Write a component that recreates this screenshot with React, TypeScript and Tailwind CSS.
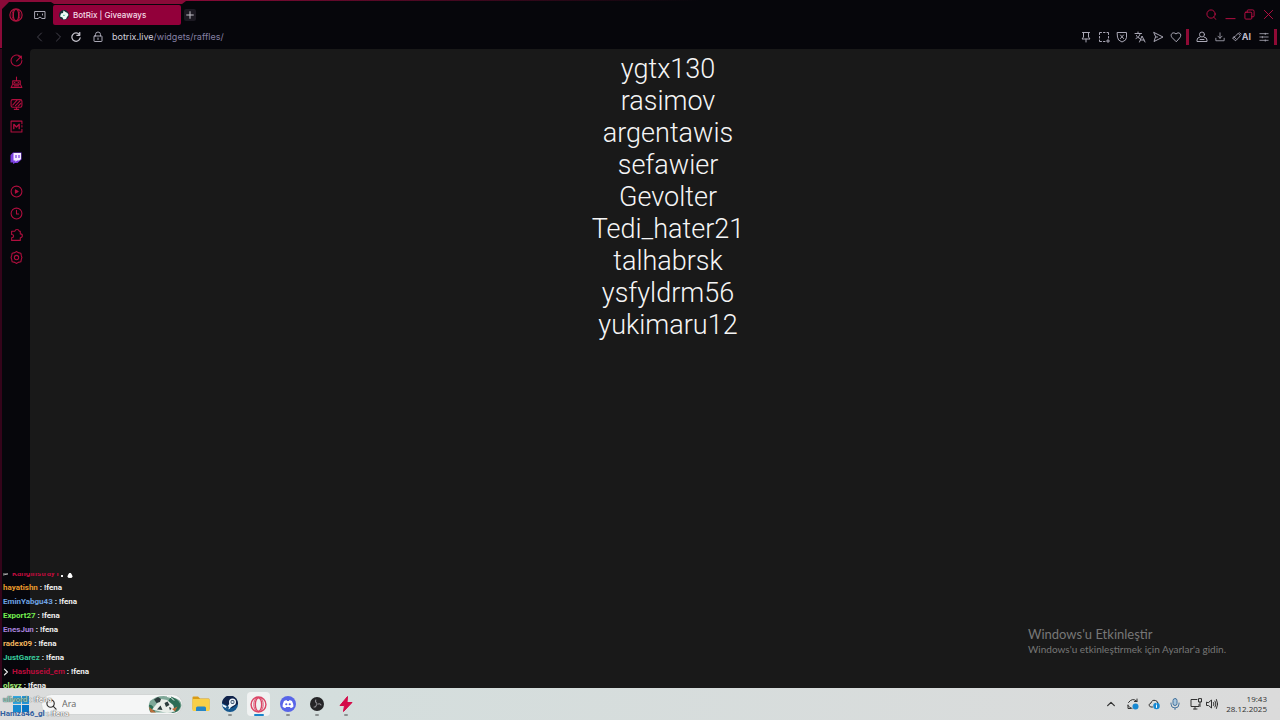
import type { ReactNode } from "react";

type IconProps = { children: ReactNode; className?: string; stroke?: number };

function Icon({ children, className = "size-3", stroke = 2 }: IconProps) {
  return (
    <svg
      viewBox="0 0 24 24"
      className={className}
      fill="none"
      stroke="currentColor"
      strokeWidth={stroke}
      strokeLinecap="round"
      strokeLinejoin="round"
      aria-hidden="true"
    >
      {children}
    </svg>
  );
}

function OperaMark({ className }: { className: string }) {
  return (
    <Icon className={className} stroke={2}>
      <circle cx="12" cy="12" r="10.5" />
      <ellipse cx="12" cy="12" rx="4.5" ry="9.5" />
      <path d="M9 2.5C4 6 4 18 9 21.5M15 2.5c5 3.500 5 15.500 0 19" strokeWidth="1.300" />
    </Icon>
  );
}

const names = [
  "ygtx130",
  "rasimov",
  "argentawis",
  "sefawier",
  "Gevolter",
  "Tedi_hater21",
  "talhabrsk",
  "ysfyldrm56",
  "yukimaru12",
];

const windowButtons = [
  { label: "Search tabs", icon: <><circle cx="11" cy="11" r="9" /><path d="m17 18 5 5" /></> },
  { label: "Minimize", icon: <path d="M2 21h20" /> },
  { label: "Restore", icon: <><rect x="2" y="7" width="15" height="15" rx="2" /><path d="M7 7V4q0-2 2-2h10q3 0 3 3v10q0 2-2 2h-3" /></> },
  { label: "Close", icon: <path d="M3 3l18 18M21 3 3 21" /> },
];

const pageTools = [
  { label: "Pin", icon: <path d="M5 3h14M7 3v9l-3 4h16l-3-4V3M12 16v6" /> },
  { label: "Snapshot", icon: <><path d="M3 7V3h4M11 3h3M18 3h3v4M21 11v3M3 11v3M3 18v3h4M11 21h3M17 20h6M20 17v6" /></> },
  { label: "Ad blocker", icon: <><path d="M3 3h18v10q0 6-9 9-9-3-9-9z" /><path d="m9 8 6 7M15 8l-6 7" /></> },
  { label: "Translate", icon: <path d="M2 5h13M8 2v3M4 15c5-2 8-6 8-10M5 9c1 3 4 5 7 6M11 22l5-12 6 12M13 18h7" /> },
  { label: "Share", icon: <path d="m4 3 18 9-18 9 3-9zM7 12h4" /> },
  { label: "Favorite", icon: <path d="M12 21 4 13C-1 7 6 0 12 6c6-6 13 1 8 7z" /> },
];

const sideItems = [
  { label: "Speed", icon: <><path d="M18 4a10 10 0 1 0 4 8" /><path d="m12 13 9-9M16 4h5v5" /></> },
  { label: "Mods", icon: <><path d="M5 9h14v6H5zM12 9V2M2 21l3-6h14l3 6zM8 12h1M15 12h1M8 18h8" /></> },
  { label: "Wallpapers", icon: <><rect x="2" y="3" width="20" height="14" rx="3" /><path d="m5 13 8-9M10 14l9-9M15 15l5-5M8 21h8M12 17v4" /></> },
  { label: "Market", icon: <><path d="M18 2H2v20h20v-5M18 2h4v5M22 10v3" /><path d="M7 16V8l5 5 5-5v8" strokeWidth="2.500" /></> },
];

const lowerItems = [
  { label: "Player", icon: <><circle cx="12" cy="12" r="10" /><path d="m10 9 5 3-5 3z" fill="currentColor" /></> },
  { label: "History", icon: <><circle cx="12" cy="12" r="10" /><path d="M12 6v7h4" /></> },
  { label: "Extensions", icon: <path d="M3 4h6c1-4 7-4 8 0h2v5c5 0 5 7 0 7v5H3v-5c5 0 5-6 0-6z" /> },
  { label: "Settings", icon: <><path d="m9 3 3-2 3 2 5 1 1 5 1 3-1 3-1 5-5 1-3 2-3-2-5-1-1-5-1-3 1-3 1-5z" /><circle cx="12" cy="12" r="4" /></> },
];

const chat = [
  { user: "hayatishn", color: "text-[#e99a2c]" },
  { user: "EminYabgu43", color: "text-[#6da2e2]" },
  { user: "Export27", color: "text-[#74ee50]" },
  { user: "EnesJun", color: "text-[#a680dc]" },
  { user: "radex09", color: "text-[#f0b45d]" },
  { user: "JustGarez", color: "text-[#38c99b]" },
  { user: "Hashuseid_em", color: "text-[#b90c3b]" },
  { user: "olsyz", color: "text-[#a5ed78]" },
];

function TabStrip() {
  return (
    <header className="flex h-[29px] items-center pr-1.5">
      <button aria-label="Opera menu" className="ml-2 flex w-4 justify-center text-[#b3123f]">
        <OperaMark className="size-[14px]" />
      </button>
      <button aria-label="Workspaces" className="ml-2.5 flex w-3 justify-center text-[#aaa8b4]">
        <Icon stroke={2}>
          <path d="M2 5h20v14h-6l-4-3-4 3H2zM7 10v2M17 10v2" />
        </Icon>
      </button>
      <a
        href="#giveaways"
        className="ml-[7px] flex h-5 w-32 items-center gap-1 rounded-xs bg-[#92003a] pl-1.5 text-[8px] font-medium text-[#f4dce6]"
      >
        <svg viewBox="0 0 20 20" className="size-[10px]" aria-hidden="true">
          <circle cx="10" cy="10" r="10" fill="#153238" />
          <path d="m9 1 4 3 4 2 2 4-3 4-2 4-5 1-2-4-5-2 2-6 4-1z" fill="#eefaf7" />
          <path d="m8 9 2 1 3-1-2 3H8z" fill="#69c6a6" />
        </svg>
        BotRix | Giveaways
      </a>
      <button aria-label="New tab" className="ml-[3px] flex size-3 items-center justify-center rounded-xs bg-[#1c1922] text-[#c4c2ca]">
        <Icon className="size-2" stroke={3}>
          <path d="M12 2v20M2 12h20" />
        </Icon>
      </button>
      <div className="ml-auto flex gap-[7px] text-[#c20f46]">
        {windowButtons.map((b) => (
          <button key={b.label} aria-label={b.label} className="flex size-3 items-center justify-center">
            <Icon className="size-[11px]">{b.icon}</Icon>
          </button>
        ))}
      </div>
    </header>
  );
}

function AddressBar() {
  return (
    <nav className="flex h-5 items-center pb-1 text-[#aaa8b6]">
      <button aria-label="Back" className="ml-[34px] text-[#45434d]">
        <Icon><path d="m15 4-8 8 8 8" /></Icon>
      </button>
      <button aria-label="Forward" className="ml-1.5 text-[#45434d]">
        <Icon><path d="m9 4 8 8-8 8" /></Icon>
      </button>
      <button aria-label="Reload" className="ml-1.5 text-[#c4c2cc]">
        <Icon className="size-3 p-px" stroke={3}><path d="M20 6a10 10 0 1 0 2 8M21 1v7h-7" /></Icon>
      </button>
      <button aria-label="Site information" className="ml-2.5">
        <Icon><rect x="4" y="10" width="16" height="11" rx="1" /><path d="M7 10V7a5 5 0 0 1 10 0v3M12 14v3" /></Icon>
      </button>
      <a href="#raffles" className="ml-2 text-[9px] text-[#d2d0dd]">
        botrix.live<span className="text-[#8580a4]">/widgets/raffles/</span>
      </a>
      <div className="ml-auto flex items-center">
        <div className="flex gap-1.5">
          {pageTools.map((t) => (
            <button key={t.label} aria-label={t.label}>
              <Icon>{t.icon}</Icon>
            </button>
          ))}
        </div>
        <span className="ml-1 h-4 w-[3px] bg-[#8f0a35]" />
        <button aria-label="Profile" className="ml-[7px]">
          <Icon><circle cx="12" cy="7" r="5" /><path d="M8 12q-6 1-6 6v3h20v-3q0-5-6-6M8 17h8" /></Icon>
        </button>
        <button aria-label="Downloads" className="ml-1.5">
          <Icon className="size-3 p-px"><path d="M12 2v13M7 10l5 5 5-5M2 15v6h20v-6" /></Icon>
        </button>
        <button className="ml-1.5 flex items-center text-[9px] font-bold text-[#bdbaca]">
          <Icon className="size-[10px]"><path d="m9 9 6-6 5 6-5 6-7 6-6-6zM18 2l4 3M5 12l4 4" /></Icon>
          AI
        </button>
        <button aria-label="Easy setup" className="ml-[7px]">
          <Icon className="size-3 p-px"><path d="M2 4h20M2 12h20M2 20h20M15 3v3M8 11v3M15 19v3" /></Icon>
        </button>
        <span className="mr-[3px] ml-1 h-4 w-[3px] bg-[#8f0a35]" />
      </div>
    </nav>
  );
}

function Sidebar() {
  return (
    <aside className="flex w-[30px] shrink-0 flex-col items-center border-l-2 border-[#34041a] pt-1 text-[#b00e3e]">
      {sideItems.map((s) => (
        <button key={s.label} aria-label={s.label} className="flex h-[22px] items-start pt-px">
          <Icon className="size-[13px]">{s.icon}</Icon>
        </button>
      ))}
      <button aria-label="Twitch" className="mt-[11px] flex h-8 items-start">
        <svg viewBox="0 0 24 24" className="size-3" aria-hidden="true">
          <path d="M6 1h17v14l-8 7h-5l-4 2v-3H1V6z" fill="#7a3fe0" />
          <path d="M7 2h15v12l-4 3h-4l-3 3v-3H7z" fill="#f3e9ff" />
          <path d="M12 6v6M18 6v6" stroke="#7a3fe0" strokeWidth="2.500" />
        </svg>
      </button>
      {lowerItems.map((s) => (
        <button key={s.label} aria-label={s.label} className="flex h-[22px] items-start pt-px">
          <Icon className="size-[13px]">{s.icon}</Icon>
        </button>
      ))}
    </aside>
  );
}

function ChatOverlay() {
  return (
    <section
      aria-label="Chat"
      className="pointer-events-none absolute -bottom-px left-0 text-[8px] leading-[14px] font-bold whitespace-nowrap text-[#f1f1f1] [font-family:Roboto,sans-serif]"
    >
      <div className="flex h-2 items-end overflow-hidden pl-[3px]">
        <svg viewBox="0 0 8 14" className="mr-px h-[14px] w-2 shrink-0" aria-hidden="true">
          <path d="m0 8 5-1M0 6h5" stroke="#aaa" />
        </svg>
        <span className="text-[#b90c3b]">Kanginstray1</span>
        <svg viewBox="0 0 14 14" className="h-[14px] w-[14px] shrink-0" aria-hidden="true">
          <path d="M2 9h2" stroke="#eee" strokeWidth="2" />
          <path d="M11 5q5 6 0 6t0-6" fill="#fff" />
        </svg>
      </div>
      {chat.map((m) => (
        <p key={m.user} className="flex pl-[3px]">
          {m.user === "Hashuseid_em" && (
            <Icon className="mt-[3px] mr-0.5 h-2 w-[7px]" stroke={4}><path d="m5 2 10 10L5 22" /></Icon>
          )}
          <span className={m.color}>{m.user}</span>
          <span className="whitespace-pre"> : !fena</span>
        </p>
      ))}
      <p className="pl-[3px] text-[#f5f5f5] [text-shadow:0_0_1px_#555,0_0_1px_#555]">
        <span className="text-[#8cc9bd]">ulivord</span> : !fena
      </p>
      <p className="text-[#f5f5f5] [text-shadow:0_0_1px_#555,0_0_1px_#555]">
        <span className="text-[#315e9f] [text-shadow:none]">Hamza46_gl</span> : !fena
      </p>
    </section>
  );
}

const taskApps = [
  {
    label: "File Explorer",
    art: (
      <svg viewBox="0 0 36 36" className="size-[18px]">
        <path d="M1 5q0-2 2-2h9l4 4h17q2 0 2 2v20H1z" fill="#d99b16" />
        <rect x="1" y="8" width="34" height="24" rx="2" fill="#f8cf48" />
        <path d="M8 32v-6q0-3 3-3h14q3 0 3 3v6z" fill="#2686c6" />
      </svg>
    ),
  },
  {
    label: "Steam",
    running: true,
    art: (
      <svg viewBox="0 0 32 32" className="size-4">
        <circle cx="16" cy="16" r="16" fill="#14578f" />
        <path d="M0 14a16 16 0 0 1 32 2L20 24z" fill="#10234a" />
        <path d="m0 16 11 5 6-9 9 5-9 6q-2 6-7 2l-8-4z" fill="#eef5fb" />
        <circle cx="21" cy="12" r="7" fill="#eef5fb" />
        <circle cx="21" cy="12" r="4" fill="#153052" />
        <circle cx="21" cy="12" r="2.500" fill="#d8e4ee" />
        <circle cx="11" cy="23" r="3" fill="#1b5686" />
      </svg>
    ),
  },
  { label: "Opera GX", running: true, active: true, art: <span className="text-[#db4465]"><OperaMark className="size-[17px]" /></span> },
  {
    label: "Discord",
    running: true,
    art: (
      <svg viewBox="0 0 32 32" className="size-4">
        <circle cx="16" cy="16" r="16" fill="#5865e8" />
        <path d="m8 10 5-2 1 2h4l1-2 5 2q3 6 3 11-3 3-6 3l-1-2h-8l-1 2q-3 0-6-3 0-5 3-11z" fill="#fff" />
        <circle cx="12.500" cy="16.500" r="2.200" fill="#5865e8" />
        <circle cx="19.500" cy="16.500" r="2.200" fill="#5865e8" />
      </svg>
    ),
  },
  {
    label: "OBS Studio",
    running: true,
    art: (
      <svg viewBox="0 0 32 32" className="size-[14px]">
        <circle cx="16" cy="16" r="16" fill="#252527" />
        <g fill="none" stroke="#8f8e93" strokeWidth="2.500">
          <path d="M16 15q-6-5-2-9" />
          <path d="M16 15q-6-5-2-9" transform="rotate(120 16 16)" />
          <path d="M16 15q-6-5-2-9" transform="rotate(240 16 16)" />
        </g>
      </svg>
    ),
  },
  {
    label: "Lightning",
    running: true,
    art: (
      <svg viewBox="0 0 28 32" className="h-4 w-[14px]">
        <path d="M17 1 2 19h9L9 31 26 13H16z" fill="#d40a49" stroke="#d40a49" strokeWidth="2" strokeLinejoin="round" />
      </svg>
    ),
  },
];

function Taskbar() {
  return (
    <footer className="flex h-8 shrink-0 items-center bg-linear-to-r from-[#dcdcdc] via-[#d4dedd] via-25% to-[#dbdbdb] text-[#303030] [font-family:'Open_Sans',sans-serif]">
      <button aria-label="Start" className="ml-[13px] grid size-4 grid-cols-2 gap-px">
        <span className="bg-[#30a7df]" />
        <span className="bg-[#2396d8]" />
        <span className="bg-[#168bd0]" />
        <span className="bg-[#0876c4]" />
      </button>
      <label className="ml-3 flex h-[21px] w-[142px] items-center rounded-full border border-[#d2d5d5] bg-[#f5f6f6] pl-1">
        <Icon className="size-[11px] shrink-0" stroke={2.5}><circle cx="10" cy="10" r="8" /><path d="m16 16 6 6" /></Icon>
        <input
          aria-label="Ara"
          placeholder="Ara"
          className="ml-[5px] w-20 min-w-0 flex-1 bg-transparent text-[9px] outline-none placeholder:text-[#666]"
        />
        <svg viewBox="0 0 68 38" className="h-[19px] w-[34px] shrink-0" aria-hidden="true">
          <path d="M4 12q18-16 46-7 18 4 17 16-3 15-18 14H6Q-2 26 4 12" fill="#7fa898" />
          <path d="M2 20q8-3 12 14H4zM46 3q20 8 19 20-5 14-18 12l5-13-12-9z" fill="#2c6d55" />
          <path d="m8 29 10-12 8-9 12 2 12 10 4 13-16 3z" fill="#e9eee9" />
          <path d="m12 9 8-5 6 4-2 6-7 2zM33 16l6-3 4 7-7 4zM18 29l7-8 4 9zM42 24l5 2-3 5z" fill="#2c3d3d" />
          <path d="M2 24l14 11H5zM48 28l11-5-5 10z" fill="#bc6e3b" />
          <path d="M38 3q9 0 14 8" stroke="#fff" strokeWidth="2" fill="none" />
        </svg>
      </label>
      <div className="ml-[3px] flex">
        {taskApps.map((a) => (
          <button
            key={a.label}
            aria-label={a.label}
            className="relative flex h-8 w-[29px] items-center justify-center"
          >
            {a.active && <span className="absolute inset-x-[3px] inset-y-1 rounded-sm bg-[#f0f2f2]" />}
            <span className="relative">{a.art}</span>
            {a.running && (
              <span
                className={
                  a.active
                    ? "absolute bottom-1 h-0.5 w-[10px] rounded-full bg-[#1883ca]"
                    : "absolute bottom-1 h-0.5 w-1 rounded-full bg-[#8b9090]"
                }
              />
            )}
          </button>
        ))}
      </div>
      <div className="ml-auto flex items-center">
        <button aria-label="Show hidden icons"><Icon className="size-[10px]" stroke={3}><path d="m4 16 8-8 8 8" /></Icon></button>
        <button aria-label="Sync" className="ml-[11px]">
          <Icon><path d="M3 9Q11-2 20 7V2M20 7h-5M2 14v7h5M2 15q3 5 8 6" /><circle cx="17" cy="17" r="6" fill="#1688d2" stroke="none" /></Icon>
        </button>
        <button aria-label="Cloud" className="ml-[9px]">
          <Icon><path d="M9 18H5q-6-5 1-8 2-7 9-5 4 1 5 5" /><circle cx="17" cy="16" r="6.500" fill="#1688d2" stroke="none" /><path d="M17 15v4M17 12v.1" stroke="#fff" /></Icon>
        </button>
        <button aria-label="Microphone" className="ml-[9px] text-[#47759e]">
          <Icon><rect x="8" y="1" width="8" height="14" rx="4" fill="#a8c5dc" /><path d="M4 10v2a8 8 0 0 0 16 0v-2M12 20v3" /></Icon>
        </button>
        <button aria-label="Network" className="ml-[9px]">
          <Icon><path d="M14 3H2v14h16v-4M7 22h7M10 17v5M17 2v6h6V2zM20 8v9" /></Icon>
        </button>
        <button aria-label="Volume" className="ml-1">
          <Icon><path d="M1 9v6h4l6 5V4L5 9zM15 9q2 3 0 6M18 6q4 6 0 12M21 3q5 9 0 18" /></Icon>
        </button>
        <time className="mr-[13px] ml-2 text-right text-[8px] leading-[10px]">
          19:43
          <br />
          28.12.2025
        </time>
      </div>
    </footer>
  );
}

export default function App() {
  return (
    <div className="relative flex h-screen flex-col overflow-hidden bg-[#06060b] [font-family:Inter,sans-serif]">
      <svg className="pointer-events-none absolute top-0 left-0 h-12 w-[700px]" viewBox="0 0 700 48" aria-hidden="true">
        <defs>
          <linearGradient id="edge-glow">
            <stop offset="0" stopColor="#8a0a38" />
            <stop offset="0.250" stopColor="#8a0a38" />
            <stop offset="1" stopColor="#8a0a38" stopOpacity="0" />
          </linearGradient>
        </defs>
        <path d="M0 0h700v1H186l-4 3H54l-3-2H9L2 9v39H0z" fill="url(#edge-glow)" />
      </svg>
      <TabStrip />
      <AddressBar />
      <div className="flex min-h-0 flex-1">
        <Sidebar />
        <main className="relative flex-1 rounded-tl-sm bg-[#191919] pt-1 pl-[26px]">
          <ul className="text-center text-[27px] leading-8 font-light text-[#f5f5f5] [font-family:Roboto,sans-serif]">
            {names.map((n) => (
              <li key={n}>{n}</li>
            ))}
          </ul>
          <div className="absolute right-[54px] bottom-8 text-[#777] [font-family:Lato,sans-serif]">
            <p className="text-[13px] leading-4">Windows'u Etkinleştir</p>
            <p className="text-[10px] leading-[14px]">Windows'u etkinleştirmek için Ayarlar'a gidin.</p>
          </div>
        </main>
      </div>
      <Taskbar />
      <ChatOverlay />
    </div>
  );
}
